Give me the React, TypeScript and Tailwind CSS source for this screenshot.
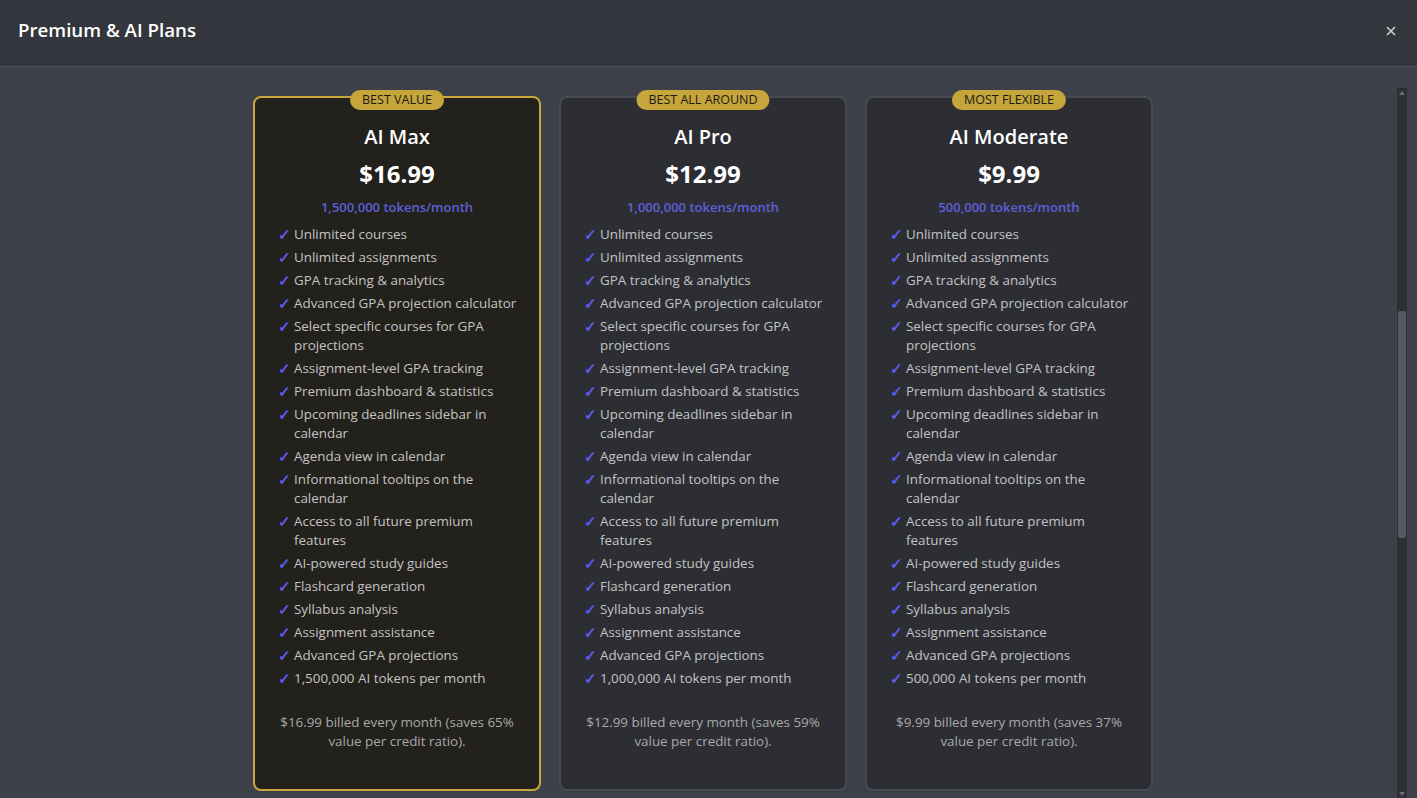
import { X } from 'lucide-react'

type Plan = {
  badge: string
  name: string
  price: string
  tokens: string
  tokenLine: string
  saves: string
  highlight?: boolean
}

const PLANS: Plan[] = [
  { badge: 'Best Value', name: 'AI Max', price: '$16.99', tokens: '1,500,000 tokens/month', tokenLine: '1,500,000 AI tokens per month', saves: '65%', highlight: true },
  { badge: 'Best All Around', name: 'AI Pro', price: '$12.99', tokens: '1,000,000 tokens/month', tokenLine: '1,000,000 AI tokens per month', saves: '59%' },
  { badge: 'Most Flexible', name: 'AI Moderate', price: '$9.99', tokens: '500,000 tokens/month', tokenLine: '500,000 AI tokens per month', saves: '37%' },
]

const FEATURES = [
  'Unlimited courses',
  'Unlimited assignments',
  'GPA tracking & analytics',
  'Advanced GPA projection calculator',
  'Select specific courses for GPA projections',
  'Assignment-level GPA tracking',
  'Premium dashboard & statistics',
  'Upcoming deadlines sidebar in calendar',
  'Agenda view in calendar',
  'Informational tooltips on the calendar',
  'Access to all future premium features',
  'AI-powered study guides',
  'Flashcard generation',
  'Syllabus analysis',
  'Assignment assistance',
  'Advanced GPA projections',
]

function PlanCard({ plan }: { plan: Plan }) {
  const features = [...FEATURES, plan.tokenLine]
  return (
    <div
      className={`relative h-[695px] w-[288px] rounded-lg border-2 px-[22px] pt-[25px] ${
        plan.highlight ? 'border-[#c8a73d] bg-[#23211c]' : 'border-[#484b53] bg-[#2d2e33]'
      }`}
    >
      <div className="absolute left-1/2 top-[-8px] -translate-x-1/2 whitespace-nowrap rounded-full bg-[#c6a53a] px-3 text-[12.5px] leading-[20px] font-medium uppercase text-[#1b1a16]">
        {plan.badge}
      </div>
      <h2 className="text-center text-[20px] leading-[28px] font-semibold text-white">{plan.name}</h2>
      <div className="mt-[7px] text-center text-[24px] leading-[32px] font-bold text-white">{plan.price}</div>
      <div className="mt-[8px] text-center text-[13px] leading-[19px] font-semibold text-[#5d5fd9]">{plan.tokens}</div>
      <ul className="mt-[8px] flex flex-col gap-[4px]">
        {features.map((f) => (
          <li key={f} className="flex gap-[4px] text-[13.4px] leading-[19px] text-[#c3c3c3]">
            <span className="w-[13px] shrink-0 pl-[1px] text-[15px] font-bold text-[#5a5cf2]">✓</span>
            <span>{f}</span>
          </li>
        ))}
      </ul>
      <p className="-mx-[6px] mt-[25px] text-center text-[13.4px] leading-[19px] text-[#a9a9a9]">
        {plan.price} billed every month (saves {plan.saves} value per credit ratio).
      </p>
    </div>
  )
}

export default function App() {
  return (
    <div
      className="flex h-[798px] flex-col overflow-hidden bg-[#3d4048]"
      style={{ fontFamily: '"Open Sans", "Noto Sans", sans-serif' }}
    >
      <header className="flex h-[67px] shrink-0 items-center justify-between border-b border-[#4a4d55] bg-[#33363d] pb-[5px] pl-[18px] pr-[19px]">
        <h1 className="text-[18.7px] font-semibold text-white">Premium &amp; AI Plans</h1>
        <X className="h-[14px] w-[14px] text-[#c8c8c8]" strokeWidth={3} />
      </header>
      <div className="flex min-h-0 flex-1">
        <main className="flex flex-1 justify-center gap-[18px] pl-[9px] pt-[29px]">
          {PLANS.map((p) => (
            <PlanCard key={p.name} plan={p} />
          ))}
        </main>
        <div className="mr-[10px] mt-[21px] flex w-[10px] flex-col items-center bg-[#2d2f35]">
          <div className="mt-[3px] h-0 w-0 border-x-[3px] border-b-[4px] border-x-transparent border-b-[#6a6d74]" />
          <div className="mt-[216px] h-[227px] w-[8px] rounded-[2px] bg-[#55585f]" />
          <div className="flex-1" />
          <div className="mb-[2px] h-0 w-0 border-x-[3px] border-t-[4px] border-x-transparent border-t-[#6a6d74]" />
        </div>
      </div>
    </div>
  )
}
